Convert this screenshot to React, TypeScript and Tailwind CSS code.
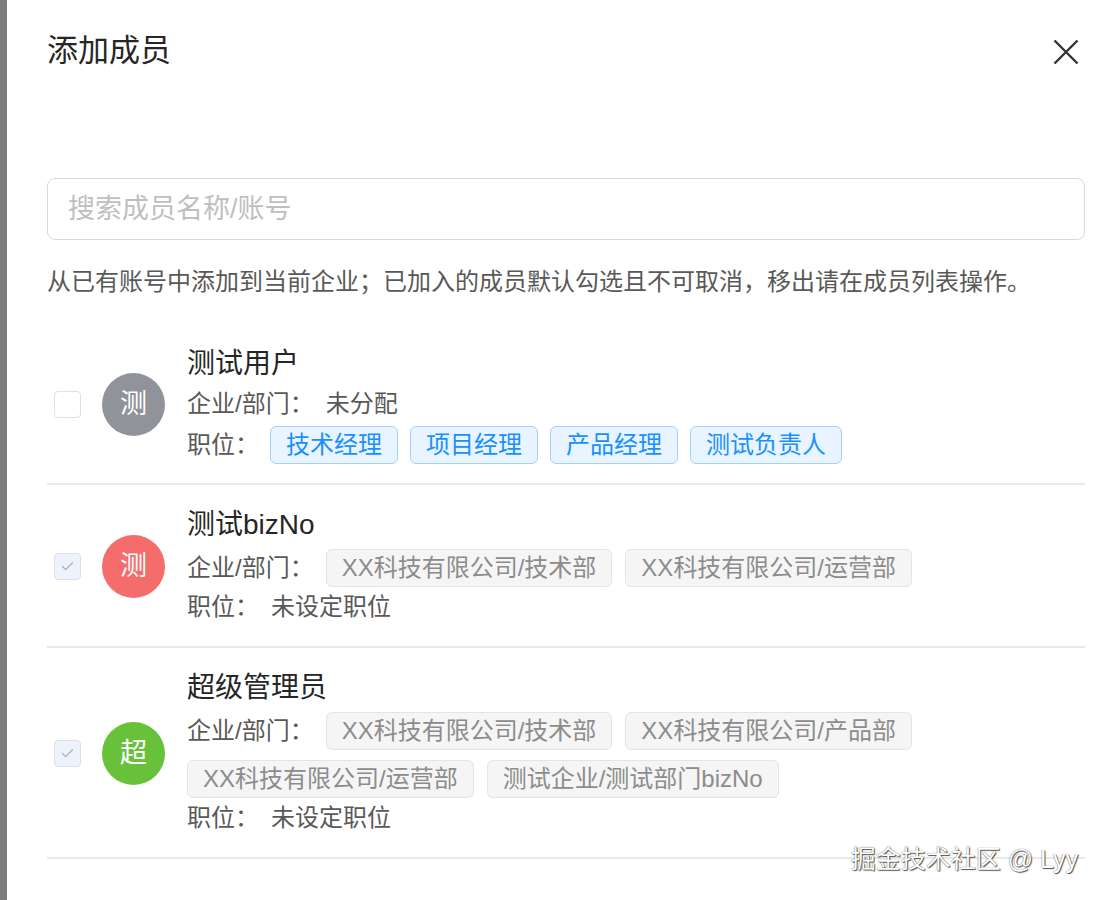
import { Check } from "lucide-react";

type Member = {
  name: string;
  initial: string;
  avatar: string;
  checked: boolean;
  depts: string[];
  roles: string[];
};

const members: Member[] = [
  {
    name: "测试用户",
    initial: "测",
    avatar: "bg-[#909399]",
    checked: false,
    depts: [],
    roles: ["技术经理", "项目经理", "产品经理", "测试负责人"],
  },
  {
    name: "测试bizNo",
    initial: "测",
    avatar: "bg-[#f56c6c]",
    checked: true,
    depts: ["XX科技有限公司/技术部", "XX科技有限公司/运营部"],
    roles: [],
  },
  {
    name: "超级管理员",
    initial: "超",
    avatar: "bg-[#67c23a]",
    checked: true,
    depts: [
      "XX科技有限公司/技术部",
      "XX科技有限公司/产品部",
      "XX科技有限公司/运营部",
      "测试企业/测试部门bizNo",
    ],
    roles: [],
  },
];

const font = "font-['Liberation_Sans','Noto_Sans_CJK_SC',sans-serif]";

function Box({ checked }: { checked: boolean }) {
  if (!checked) {
    return <div className="h-[27px] w-[27px] shrink-0 rounded-[4px] border-[1.5px] border-[#dcdfe6] bg-white" />;
  }
  return (
    <div className="flex h-[27px] w-[27px] shrink-0 items-center justify-center rounded-[4px] border-[1.5px] border-[#dcdfe6] bg-[#edf2fc]">
      <Check className="h-[15px] w-[15px] text-[#aab0ba]" strokeWidth={2} />
    </div>
  );
}

function Tag({ text, blue }: { text: string; blue?: boolean }) {
  return (
    <span
      className={
        blue
          ? "flex h-[38px] items-center rounded-[6px] border-[1.5px] border-[#a3d3ff] bg-[#e8f4ff] px-[15px] text-[24px] text-[#1890ff]"
          : "flex h-[38px] items-center rounded-[6px] border-[1.5px] border-[#e4e4e4] bg-[#f5f5f5] px-[15px] text-[24px] text-[#8c8c8c]"
      }
    >
      {text}
    </span>
  );
}

function MemberRow({ m }: { m: Member }) {
  return (
    <div className="flex items-center border-b-2 border-[#e8e8e8] pt-[20px] pb-[19px] pl-[7px]">
      <Box checked={m.checked} />
      <div
        className={`ml-[21px] flex h-[63px] w-[63px] shrink-0 items-center justify-center rounded-full text-[27px] text-white ${m.avatar}`}
      >
        {m.initial}
      </div>
      <div className="ml-[22px] flex flex-col text-[24px] text-[#595959]">
        <div className="text-[28px] leading-[40px] text-[#262626]">{m.name}</div>
        {m.depts.length === 0 ? (
          <div className="flex h-[40px] items-center gap-x-[12px]">
            <span>企业/部门：</span>
            <span>未分配</span>
          </div>
        ) : (
          <div className="mt-[4px] flex flex-wrap items-center gap-x-[13px] gap-y-[10px]">
            <span className="mr-[-1px]">企业/部门：</span>
            {m.depts.map((d) => (
              <Tag key={d} text={d} />
            ))}
          </div>
        )}
        {m.roles.length > 0 ? (
          <div className="mt-[2px] flex items-center gap-x-[12px]">
            <span className="mr-[-1px]">职位：</span>
            {m.roles.map((r) => (
              <Tag key={r} text={r} blue />
            ))}
          </div>
        ) : (
          <div className="flex h-[40px] items-center gap-x-[12px]">
            <span>职位：</span>
            <span>未设定职位</span>
          </div>
        )}
      </div>
    </div>
  );
}

export default function App() {
  return (
    <div className={`flex h-[900px] w-[1102px] overflow-hidden bg-white ${font}`}>
      <div className="w-[7px] shrink-0 bg-[#7d7d7d]" />
      <div className="relative flex-1 pr-[17px] pl-[40px]">
        <h1 className="pt-[31px] text-[31px] leading-[40px] font-normal text-[#262626]">添加成员</h1>
        <button className="absolute top-[39px] right-[23px] h-[26px] w-[26px] text-[#333]">
          <svg viewBox="0 0 26 26" className="h-[26px] w-[26px]" fill="none" stroke="currentColor" strokeWidth="2.4">
            <path d="M1.5 1.5 L24.5 24.5 M24.5 1.5 L1.5 24.5" />
          </svg>
        </button>

        <input
          placeholder="搜索成员名称/账号"
          className="mt-[107px] block h-[62px] w-full rounded-[8px] border-[1.5px] border-[#d9d9d9] px-[20px] text-[27px] outline-none placeholder:text-[#bfbfbf]"
        />

        <p className="mt-[26px] text-[24px] leading-[32px] text-[#595959]">
          从已有账号中添加到当前企业；已加入的成员默认勾选且不可取消，移出请在成员列表操作。
        </p>

        <div className="mt-[26px]">
          {members.map((m) => (
            <MemberRow key={m.name} m={m} />
          ))}
        </div>

        <div className="absolute right-[24px] bottom-[26px] text-[25px] leading-[30px] text-white [text-shadow:0_0_1px_#333,1px_1px_1px_#555]">
          掘金技术社区 @ Lyy
        </div>
      </div>
    </div>
  );
}
